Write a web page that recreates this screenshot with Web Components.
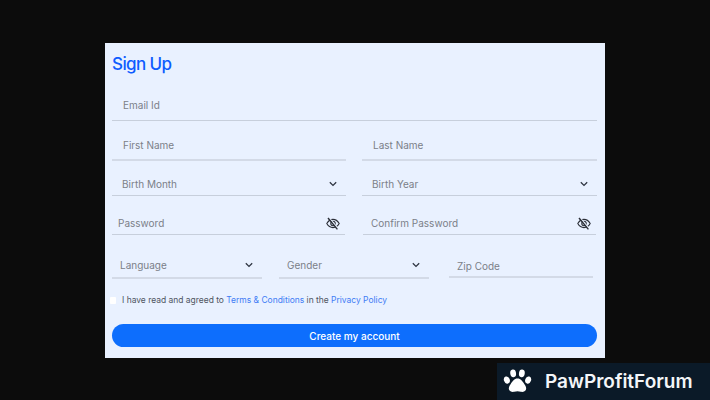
<!DOCTYPE html>
<html lang="en">
<head>
<meta charset="utf-8">
<title>Sign Up</title>
<style>
  html, body { margin: 0; height: 100%; }
  body { background: #0c0c0c; font-family: Inter, "Liberation Sans", sans-serif; overflow: hidden; }
</style>
</head>
<body>
<signup-page>
  <signup-card heading="Sign Up">
    <form-row cols="1fr" top="5">
      <form-field label="Email Id" h="30" inset="11" lift="2"></form-field>
    </form-row>
    <form-row cols="234px 235px" gap="16" top="10">
      <form-field label="First Name" h="30" inset="11" line="2"></form-field>
      <form-field label="Last Name" h="30" inset="11" line="2"></form-field>
    </form-row>
    <form-row cols="234px 235px" gap="16" top="12">
      <form-field label="Birth Month" h="23" inset="10" kind="select"></form-field>
      <form-field label="Birth Year" h="23" inset="10" kind="select"></form-field>
    </form-row>
    <form-row cols="233px 233px" gap="18" top="16">
      <form-field label="Password" h="23" inset="6" kind="password"></form-field>
      <form-field label="Confirm Password" h="23" inset="8" kind="password"></form-field>
    </form-row>
    <form-row cols="150px 150px 147px" gap="17" top="15">
      <form-field label="Language" h="29" inset="8" line="2" kind="select" drop="2"></form-field>
      <form-field label="Gender" h="29" inset="8" line="2" kind="select" drop="2"></form-field>
      <form-field label="Zip Code" h="28" inset="8" line="2" shift="3" drop="5"></form-field>
    </form-row>
    <terms-check>
      I have read and agreed to <a>Terms &amp; Conditions</a> in the <a>Privacy Policy</a>
    </terms-check>
    <submit-button>Create my account</submit-button>
  </signup-card>
  <paw-badge>PawProfitForum</paw-badge>
</signup-page>

<script>
class SignupPage extends HTMLElement {
    constructor() {
        super();
        this.attachShadow({ mode: 'open' });
        this.shadowRoot.innerHTML = `
            <style>
                :host {
                    display: flex;
                    justify-content: center;
                    align-items: flex-start;
                    width: 710px;
                    height: 400px;
                    padding-top: 43px;
                    box-sizing: border-box;
                    position: relative;
                }
            </style>
            <slot></slot>
        `;
    }
}

class SignupCard extends HTMLElement {
    constructor() {
        super();
        this.attachShadow({ mode: 'open' });
    }

    connectedCallback() {
        this.shadowRoot.innerHTML = `
            <style>
                :host {
                    display: block;
                    width: 500px;
                    height: 315px;
                    box-sizing: border-box;
                    padding: 0 8px 0 7px;
                    background: #e9f1ff;
                }
                h1 {
                    margin: 0;
                    height: 43px;
                    padding-bottom: 2px;
                    box-sizing: border-box;
                    display: flex;
                    align-items: center;
                    font-size: 17px;
                    font-weight: 500;
                    letter-spacing: -0.6px;
                    color: #0d5cff;
                }
            </style>
            <h1>${this.getAttribute('heading')}</h1>
            <slot></slot>
        `;
    }
}

class FormRow extends HTMLElement {
    constructor() {
        super();
        this.attachShadow({ mode: 'open' });
    }

    connectedCallback() {
        const cols = this.getAttribute('cols');
        const gap = this.getAttribute('gap') || 0;
        const top = this.getAttribute('top') || 0;
        this.shadowRoot.innerHTML = `
            <style>
                :host {
                    display: grid;
                    grid-template-columns: ${cols};
                    column-gap: ${gap}px;
                    margin-top: ${top}px;
                    align-items: start;
                }
            </style>
            <slot></slot>
        `;
    }
}

const CHEVRON = `<svg width="8" height="6" viewBox="0 0 8 6"><path d="M.8 1.200L4 4.400l3.200-3.200" fill="none" stroke="#2f3542" stroke-width="1.300"/></svg>`;
const EYE_OFF = `<svg width="14" height="13" viewBox="0 0 14 13" fill="none" stroke="#2b2f38" stroke-width="1.100">
    <path d="M.8 6.500c1.600-2.800 3.500-4.100 6.200-4.100s4.600 1.300 6.200 4.100c-1.600 2.800-3.500 4.100-6.200 4.100S2.400 9.300.8 6.500z"/>
    <circle cx="7" cy="6.500" r="2.200"/>
    <path d="M2.900.4l9.400 11.400" stroke="#e9f1ff" stroke-width="1.100"/>
    <path d="M2 1l9.400 11.400" stroke-width="1.400"/>
</svg>`;

class FormField extends HTMLElement {
    constructor() {
        super();
        this.attachShadow({ mode: 'open' });
    }

    connectedCallback() {
        const kind = this.getAttribute('kind');
        const h = this.getAttribute('h');
        const inset = this.getAttribute('inset');
        const line = Number(this.getAttribute('line') || 1);
        const lift = this.getAttribute('lift') || 0;
        const drop = this.getAttribute('drop') || 0;
        const shift = this.getAttribute('shift') || 0;
        let icon = '';
        if (kind === 'select') icon = CHEVRON;
        if (kind === 'password') icon = EYE_OFF;
        this.shadowRoot.innerHTML = `
            <style>
                :host {
                    display: flex;
                    align-items: center;
                    justify-content: space-between;
                    height: ${h}px;
                    box-sizing: border-box;
                    margin-left: ${shift}px;
                    padding: ${drop}px ${kind === 'password' ? 5 : 9}px ${lift}px ${inset}px;
                    border-bottom: ${line}px solid ${line > 1 ? '#d3dae7' : '#c7cfdc'};
                    font-size: 10px;
                    color: #7b8088;
                }
                svg { display: block; }
            </style>
            <span>${this.getAttribute('label')}</span>
            ${icon}
        `;
    }
}

class TermsCheck extends HTMLElement {
    constructor() {
        super();
        this.attachShadow({ mode: 'open' });
        this.shadowRoot.innerHTML = `
            <style>
                :host {
                    display: flex;
                    align-items: center;
                    gap: 6px;
                    margin: 13px 0 0 -2px;
                    height: 16px;
                    font-size: 8.460px;
                    color: #4f5561;
                }
                i {
                    width: 6px;
                    height: 7px;
                    flex: none;
                    background: #fff;
                    border-radius: 1px;
                }
                ::slotted(a) { color: #3f7cf5; }
            </style>
            <i></i>
            <span><slot></slot></span>
        `;
    }
}

class SubmitButton extends HTMLElement {
    constructor() {
        super();
        this.attachShadow({ mode: 'open' });
        this.shadowRoot.innerHTML = `
            <style>
                :host {
                    display: flex;
                    align-items: center;
                    justify-content: center;
                    height: 23px;
                    margin-top: 16px;
                    border-radius: 12px;
                    background: #0d6efd;
                    color: #fff;
                    font-size: 10px;
                    font-weight: 500;
                }
            </style>
            <slot></slot>
        `;
    }
}

class PawBadge extends HTMLElement {
    constructor() {
        super();
        this.attachShadow({ mode: 'open' });
        this.shadowRoot.innerHTML = `
            <style>
                :host {
                    position: absolute;
                    right: 0;
                    bottom: 0;
                    width: 213px;
                    height: 37px;
                    box-sizing: border-box;
                    padding-left: 6px;
                    display: flex;
                    align-items: center;
                    gap: 13px;
                    background: #0b1a28;
                    color: #f4f6f8;
                    font-size: 19px;
                    font-weight: 600;
                }
                svg { display: block; flex: none; }
            </style>
            <svg width="29" height="28" viewBox="0 0 30 28" fill="#fff">
                <ellipse cx="4" cy="12" rx="3" ry="3.800" transform="rotate(-20 4 12)"/>
                <ellipse cx="10.500" cy="5" rx="3" ry="4" transform="rotate(-8 10.500 5)"/>
                <ellipse cx="19.500" cy="5" rx="3" ry="4" transform="rotate(8 19.500 5)"/>
                <ellipse cx="26" cy="12" rx="3" ry="3.800" transform="rotate(20 26 12)"/>
                <path d="M15 10.500c3.500 0 5 2.800 7 5.500 1.600 2.200 2.400 4 1.800 5.800-.6 2-3.300 2.800-5.300 2.300-1.400-.3-2.400-.6-3.500-.6s-2.100.3-3.500.6c-2 .5-4.700-.3-5.300-2.300-.6-1.800.2-3.600 1.800-5.800 2-2.700 3.500-5.500 7-5.500z"/>
            </svg>
            <slot></slot>
        `;
    }
}

customElements.define('signup-page', SignupPage);
customElements.define('signup-card', SignupCard);
customElements.define('form-row', FormRow);
customElements.define('form-field', FormField);
customElements.define('terms-check', TermsCheck);
customElements.define('submit-button', SubmitButton);
customElements.define('paw-badge', PawBadge);
</script>
</body>
</html>
